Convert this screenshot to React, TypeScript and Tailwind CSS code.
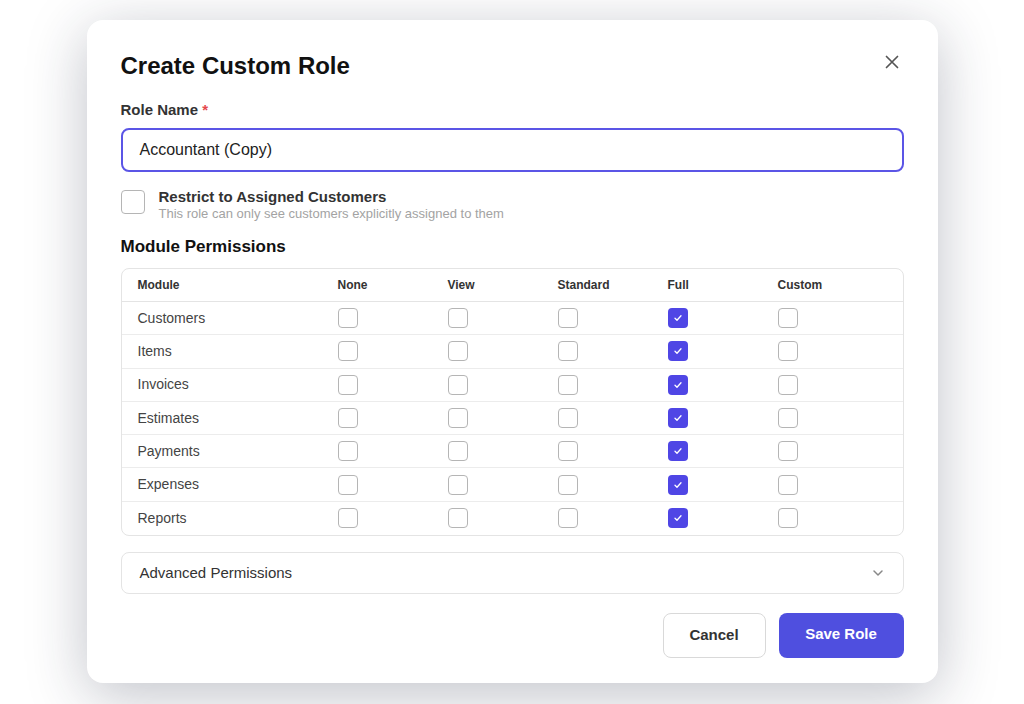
import React from "react";

const modules = ["Customers", "Items", "Invoices", "Estimates", "Payments", "Expenses", "Reports"];
const cols = ["None", "View", "Standard", "Full", "Custom"];

function Box({ checked }: { checked?: boolean }) {
  return checked ? (
    <div className="w-[20px] h-[20px] rounded-[4px] bg-[#4f46e5] flex items-center justify-center">
      <svg width="12" height="12" viewBox="0 0 12 12" fill="none">
        <path d="M3 6.2l2 2 4-4.4" stroke="white" strokeWidth="1.3" strokeLinecap="round" strokeLinejoin="round" />
      </svg>
    </div>
  ) : (
    <div className="w-[20px] h-[20px] rounded-[4px] border border-[#b5b5b5] bg-white" />
  );
}

export default function App() {
  return (
    <div className="w-[1024px] h-[704px] bg-white flex justify-center pt-[20px]" style={{ fontFamily: '"Liberation Sans", Arial, sans-serif' }}>
      <div className="relative w-[851px] h-[663px] bg-white rounded-[16px] shadow-[0_12px_60px_rgba(30,35,60,0.28)] px-[34px] pt-[31px]">
        <button className="absolute right-[36px] top-[32px] text-[#555]">
          <svg width="20" height="20" viewBox="0 0 20 20" fill="none">
            <path d="M4.5 4.5l11 11M15.5 4.5l-11 11" stroke="#555" strokeWidth="1.7" strokeLinecap="round" />
          </svg>
        </button>
        <h1 className="text-[24px] font-bold text-[#111] leading-[30px]">Create Custom Role</h1>
        <div className="mt-[20px] text-[15px] font-bold text-[#333] leading-[18px]">
          Role Name <span className="text-[#e5484d]">*</span>
        </div>
        <div className="mt-[9px] h-[44px] rounded-[8px] border-2 border-[#5b55e6] flex items-center px-[17px] text-[16px] text-[#222]">
          Accountant (Copy)
        </div>
        <div className="mt-[16px] flex gap-[14px]">
          <div className="w-[24px] h-[24px] rounded-[4px] border border-[#b5b5b5] mt-[2px]" />
          <div>
            <div className="text-[15px] font-bold text-[#333] leading-[18px]">Restrict to Assigned Customers</div>
            <div className="text-[13px] text-[#a3a3a3] leading-[16px]">This role can only see customers explicitly assigned to them</div>
          </div>
        </div>
        <h2 className="mt-[15px] text-[17px] font-bold text-[#111] leading-[20px]">Module Permissions</h2>
        <div className="mt-[11px] border border-[#e4e4e4] rounded-[8px]">
          <div className="flex h-[33px] items-center border-b border-[#e4e4e4] text-[12px] font-bold text-[#333]">
            <div className="w-[216px] pl-[16px]">Module</div>
            {cols.map((c) => (
              <div key={c} className="w-[110px]">{c}</div>
            ))}
          </div>
          {modules.map((m, i) => (
            <div key={m} className={`flex h-[33.3px] items-center text-[14px] text-[#444] ${i < modules.length - 1 ? "border-b border-[#ececec]" : ""}`}>
              <div className="w-[216px] pl-[16px]">{m}</div>
              {cols.map((c) => (
                <div key={c} className="w-[110px]">
                  <Box checked={c === "Full"} />
                </div>
              ))}
            </div>
          ))}
        </div>
        <div className="mt-[16px] h-[42px] border border-[#e4e4e4] rounded-[8px] flex items-center justify-between px-[18px]">
          <span className="text-[15px] text-[#333]">Advanced Permissions</span>
          <svg width="14" height="14" viewBox="0 0 14 14" fill="none">
            <path d="M3 5l4 4 4-4" stroke="#888" strokeWidth="1.5" strokeLinecap="round" strokeLinejoin="round" />
          </svg>
        </div>
        <div className="mt-[19px] flex justify-end gap-[13px]">
          <button className="w-[103px] h-[45px] rounded-[8px] border border-[#d9d9d9] bg-white text-[15px] font-bold text-[#333]">Cancel</button>
          <button className="w-[125px] h-[45px] rounded-[8px] bg-[#4f4fdf] text-[15px] font-bold text-white pb-[3px]">Save Role</button>
        </div>
      </div>
    </div>
  );
}
